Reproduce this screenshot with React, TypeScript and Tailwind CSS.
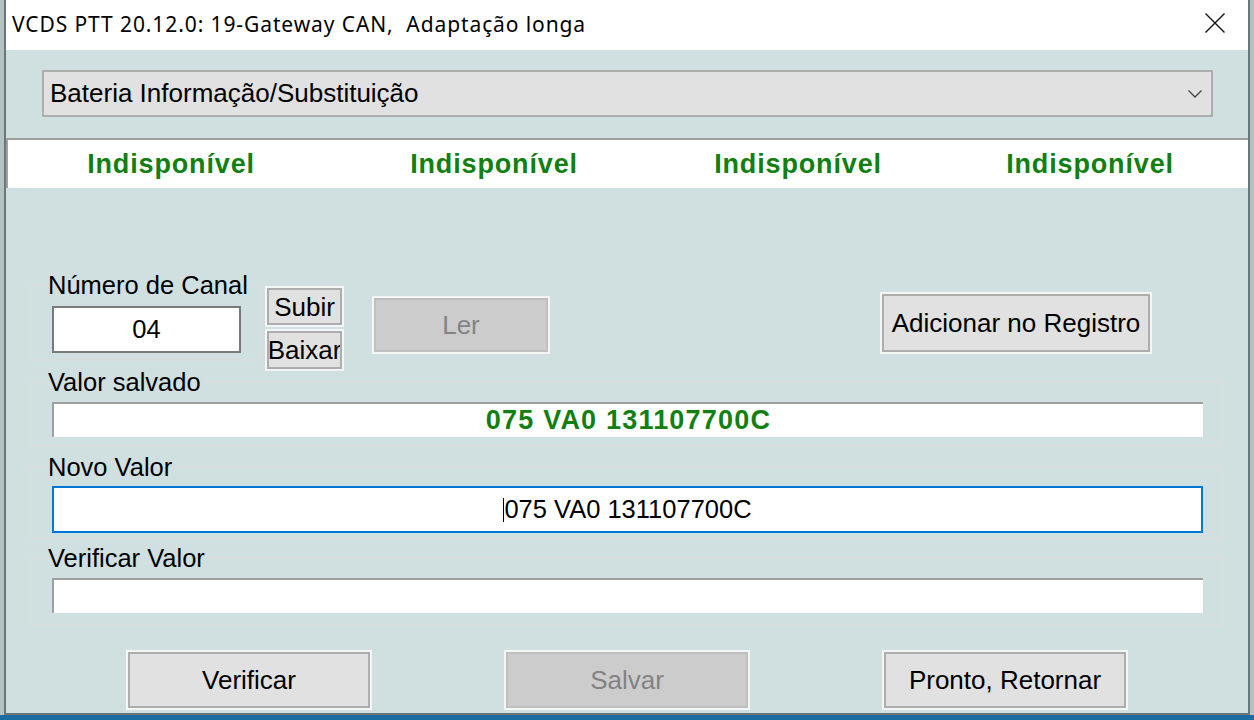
import React from "react";

const ui = "font-['Liberation_Sans',Arial,sans-serif]";

const Btn: React.FC<{
  label: string;
  w: string;
  h: string;
  disabled?: boolean;
  className?: string;
}> = ({ label, w, h, disabled, className = "" }) => (
  <div
    className={`${w} ${h} ${className} shrink-0 flex items-center justify-center overflow-hidden whitespace-nowrap border-2 shadow-[0_0_0_2px_#f4f6f6] text-[26px] leading-none ${
      disabled
        ? "bg-[#cccccc] border-[#bfbfbf] text-[#838383]"
        : "bg-[#e1e1e1] border-[#adadad] text-black"
    }`}
  >
    {label}
  </div>
);

const Group: React.FC<{
  legend: string;
  className?: string;
  children: React.ReactNode;
}> = ({ legend, className = "", children }) => (
  <fieldset className={`border-2 border-[#d9dddd] ${className}`}>
    <legend className="ml-[15px] px-[1px] text-[25.5px] leading-[28px] text-black">
      {legend}
    </legend>
    {children}
  </fieldset>
);

export default function App() {
  const columns = ["w-[326px]", "w-[320px]", "w-[288px]", "w-[296px]"];

  return (
    <div className={`w-[1254px] h-[720px] bg-[#1b6ca3] overflow-hidden ${ui}`}>
      <div className="h-[715px] bg-[#b3c3c3] px-[4px]">
        <div className="h-full flex flex-col border-x-2 border-b-2 border-[#6b7676] bg-[#d0dfdf]">
          {/* Title bar */}
          <div className="h-[50px] shrink-0 bg-white flex items-center pl-[6px] pr-[23px]">
            <span className="flex-1 whitespace-pre font-['Noto_Sans',sans-serif] text-[21px] tracking-[0.9px] text-black">
              VCDS PTT 20.12.0: 19-Gateway CAN,  Adaptação longa
            </span>
            <svg width="20" height="20" viewBox="0 0 20 20" className="mb-[4px]">
              <path d="M0.5 0.5 L19.5 19.5 M19.5 0.5 L0.5 19.5" stroke="#111" strokeWidth="1.4" />
            </svg>
          </div>

          {/* Combo box */}
          <div className="mt-[20px] ml-[36px] w-[1171px] h-[47px] shrink-0 bg-[#e1e1e1] border-2 border-[#adadad] flex items-center pl-[6px] pr-[8px]">
            <span className="flex-1 text-[26px] text-black">
              Bateria Informação/Substituição
            </span>
            <svg width="16" height="10" viewBox="0 0 16 10">
              <path d="M1.5 1.5 L8 8 L14.5 1.5" fill="none" stroke="#444" strokeWidth="1.3" />
            </svg>
          </div>

          {/* Status band */}
          <div className="mt-[21px] h-[50px] shrink-0 bg-white border-t-2 border-l-2 border-[#a0a0a0] flex items-center">
            {columns.map((w, i) => (
              <div
                key={i}
                className={`${w} text-center text-[27px] font-bold tracking-[0.85px] text-[#118011]`}
              >
                Indisponível
              </div>
            ))}
          </div>

          {/* Main */}
          <div className="px-[24px] flex flex-col">
            <div className="mt-[83px] h-[90px] shrink-0 flex items-start">
              <Group legend="Número de Canal" className="w-[231px] pb-[6px]">
                <div className="ml-[20px] mt-[7px] w-[189px] h-[47px] bg-white border-2 border-[#7a7a7a] flex items-center justify-center text-[25.5px]">
                  04
                </div>
              </Group>

              <div className="ml-[6px] mt-[17px] flex flex-col gap-[6px]">
                <Btn label="Subir" w="w-[75px]" h="h-[37px]" />
                <Btn label="Baixar" w="w-[75px]" h="h-[38px]" />
              </div>

              <Btn label="Ler" w="w-[174px]" h="h-[54px]" disabled className="ml-[32px] mt-[27px]" />

              <Btn label="Adicionar no Registro" w="w-[268px]" h="h-[58px]" className="ml-[334px] mt-[23px]" />
            </div>

            <Group legend="Valor salvado" className="mt-[7px] pb-[8px]">
              <div className="ml-[20px] mt-[6px] w-[1151px] h-[35px] bg-white border-t-2 border-l-2 border-[#a0a0a0] flex items-center justify-center text-[27px] font-bold tracking-[1.2px] text-[#118011]">
                075 VA0 131107700C
              </div>
            </Group>

            <Group legend="Novo Valor" className="mt-[6px] pb-[4px]">
              <div className="ml-[20px] mt-[5px] w-[1151px] h-[47px] bg-white border-2 border-[#0078d7] flex items-center justify-center text-[25.5px] text-black">
                <span className="w-[1px] h-[24px] bg-black" />
                <span>075 VA0 131107700C</span>
              </div>
            </Group>

            <Group legend="Verificar Valor" className="mt-[5px] pb-[11px]">
              <div className="ml-[20px] mt-[6px] w-[1151px] h-[35px] bg-white border-t-2 border-l-2 border-[#a0a0a0]" />
            </Group>

            <div className="mt-[26px] flex">
              <Btn label="Verificar" w="w-[242px]" h="h-[56px]" className="ml-[98px]" />
              <Btn label="Salvar" w="w-[242px]" h="h-[56px]" disabled className="ml-[136px]" />
              <Btn label="Pronto, Retornar" w="w-[242px]" h="h-[56px]" className="ml-[136px]" />
            </div>
          </div>
        </div>
      </div>
    </div>
  );
}
